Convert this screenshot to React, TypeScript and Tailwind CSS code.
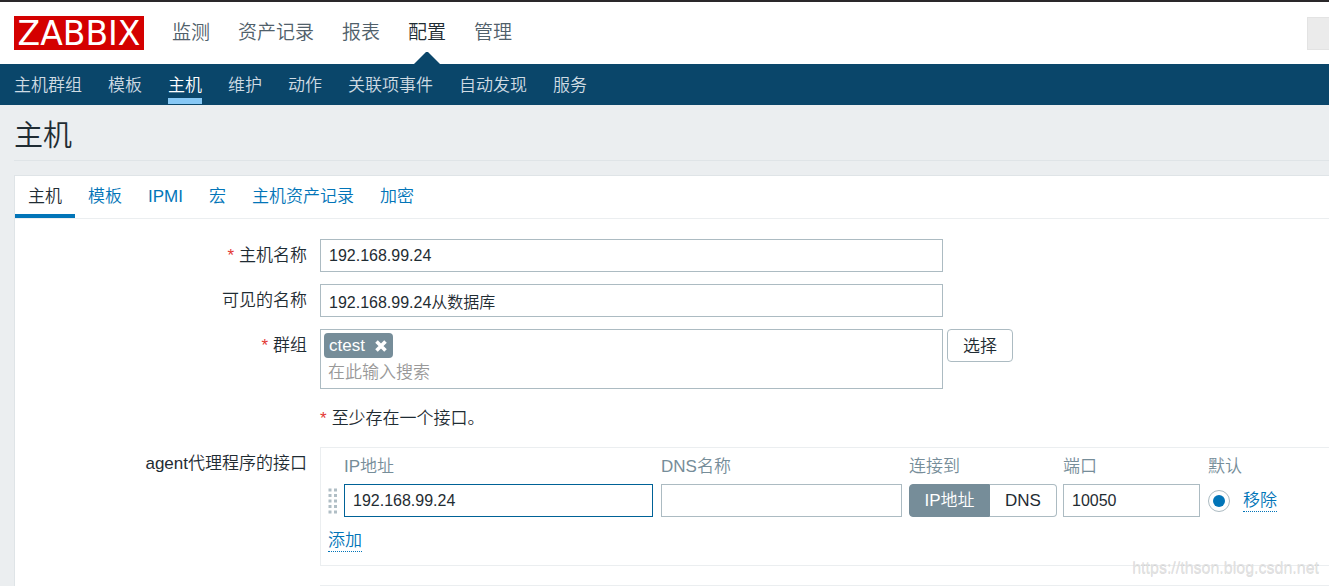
import { useState } from "react";
import type { ReactNode } from "react";

const mainMenu = ["监测", "资产记录", "报表", "配置", "管理"];
const subMenu = ["主机群组", "模板", "主机", "维护", "动作", "关联项事件", "自动发现", "服务"];
const tabs = ["主机", "模板", "IPMI", "宏", "主机资产记录", "加密"];

const inputClass =
  "h-[33px] border border-[#acbbc2] bg-white px-2 text-base text-[#1f2c33] outline-none focus:border-[#006297]";

function Asterisk() {
  return <span className="mr-[5px] text-[#e33734]">*</span>;
}

type RowProps = {
  label?: string;
  htmlFor?: string;
  required?: boolean;
  children: ReactNode;
};

function FormRow({ label, htmlFor, required, children }: RowProps) {
  return (
    <div className="grid grid-cols-[292px_minmax(0,1fr)] gap-x-[13px]">
      <div className="text-right leading-[34px]">
        {label && (
          <label htmlFor={htmlFor} className="block h-8">
            {required && <Asterisk />}
            {label}
          </label>
        )}
      </div>
      <div>{children}</div>
    </div>
  );
}

function Header() {
  return (
    <header className="border-t-2 border-[#2a282a] bg-white">
      <div className="flex h-[62px] items-center justify-between pl-3.5">
        <div className="flex items-center gap-7">
          <a
            href="#"
            className="flex h-[34px] w-[130px] items-center justify-center bg-[#d40000] font-['DejaVu_Sans',sans-serif] text-[33px] leading-none font-normal text-white"
          >
            ZABBIX
          </a>
          <nav className="flex gap-7 text-[19px]">
            {mainMenu.map((item) => (
              <a
                key={item}
                href="#"
                className={`relative leading-[62px] ${item === "配置" ? "text-[#1f2c33]" : "text-[#50606a]"}`}
              >
                {item}
                {item === "配置" && (
                  <svg className="absolute bottom-0 left-1/2 -translate-x-1/2" width="26" height="12" viewBox="0 0 26 12">
                    <path d="M0 12L12 0h2l12 12z" fill="#0a466a" />
                  </svg>
                )}
              </a>
            ))}
          </nav>
        </div>
        <input
          type="search"
          aria-label="搜索"
          className="h-[33px] w-[22px] border border-r-0 border-[#e3e3e3] bg-[#ebebeb] outline-none"
        />
      </div>
      <nav className="flex h-[41px] gap-[26px] bg-[#0a466a] px-3.5">
        {subMenu.map((item) => (
          <a
            key={item}
            href="#"
            className={`mb-px h-10 border-b-[6px] pt-1 leading-9 ${
              item === "主机" ? "border-[#87c8f5] text-white" : "border-transparent text-[#cfdbe3]"
            }`}
          >
            {item}
          </a>
        ))}
      </nav>
    </header>
  );
}

function GroupSelect() {
  return (
    <div className="flex items-start gap-1">
      <div className="h-[60px] w-[623px] border border-[#acbbc2] pt-[3px] pl-[3px]">
        <span className="flex h-[25px] w-[69px] items-center justify-between rounded-sm bg-[#768d99] pr-1.5 pl-[5px] text-white">
          ctest
          <button type="button" aria-label="移除 ctest">
            <svg width="12" height="12" viewBox="0 0 12 12">
              <path d="M1.5 1.5l9 9M10.5 1.5l-9 9" stroke="#fff" strokeWidth="3.6" />
            </svg>
          </button>
        </span>
        <input
          id="groups"
          placeholder="在此输入搜索"
          className="block h-[30px] w-full pl-1 outline-none placeholder:text-[#999]"
        />
      </div>
      <button type="button" className="h-[33px] w-[66px] rounded-sm border border-[#acbbc2] pt-0.5">
        选择
      </button>
    </div>
  );
}

function DragHandle() {
  return (
    <svg width="10" height="26" viewBox="0 0 10 26" fill="#b0bec5">
      {[0, 1, 2, 3, 4].map((i) => (
        <g key={i}>
          <rect x="0.5" y={i * 5.5 + 0.5} width="3" height="3" />
          <rect x="6" y={i * 5.5 + 0.5} width="3" height="3" />
        </g>
      ))}
    </svg>
  );
}

const linkClass = "border-b border-dotted border-[#0275b8] leading-5 text-[#0275b8]";

function Interfaces() {
  const [connectTo, setConnectTo] = useState("ip");

  return (
    <div className="border border-r-0 border-[#ebeef0] pl-[7px]">
      <table className="w-full table-fixed border-collapse text-left">
        <colgroup>
          <col className="w-4" />
          <col className="w-[317px]" />
          <col className="w-[248px]" />
          <col className="w-[154px]" />
          <col className="w-[145px]" />
          <col className="w-[35px]" />
          <col />
        </colgroup>
        <thead>
          <tr className="h-9 text-[#768d99]">
            <td />
            <th className="pt-0.5 font-[350]">IP地址</th>
            <th className="pt-0.5 font-[350]">DNS名称</th>
            <th className="pt-0.5 font-[350]">连接到</th>
            <th className="pt-0.5 font-[350]">端口</th>
            <th colSpan={2} className="pt-0.5 font-[350]">默认</th>
          </tr>
        </thead>
        <tbody>
          <tr className="h-[33px]">
            <td>
              <DragHandle />
            </td>
            <td>
              <input
                aria-label="IP地址"
                defaultValue="192.168.99.24"
                className="block h-[33px] w-[309px] border border-[#006297] px-2 text-base outline-none"
              />
            </td>
            <td>
              <input aria-label="DNS名称" className={`block w-[241px] ${inputClass}`} />
            </td>
            <td>
              <div className="relative flex w-[148px] text-center leading-[31px]">
                <label className="w-[81px] cursor-pointer rounded-l-sm border border-[#acbbc2] has-checked:border-[#768d99] has-checked:bg-[#768d99] has-checked:text-white">
                  <input
                    type="radio"
                    name="connect"
                    className="sr-only"
                    checked={connectTo === "ip"}
                    onChange={() => setConnectTo("ip")}
                  />
                  IP地址
                </label>
                <label className="w-[67px] cursor-pointer rounded-r-sm border border-l-0 border-[#acbbc2] has-checked:border-[#768d99] has-checked:bg-[#768d99] has-checked:text-white">
                  <input
                    type="radio"
                    name="connect"
                    className="sr-only"
                    checked={connectTo === "dns"}
                    onChange={() => setConnectTo("dns")}
                  />
                  DNS
                </label>
              </div>
            </td>
            <td>
              <input aria-label="端口" defaultValue="10050" className={`block w-[137px] ${inputClass}`} />
            </td>
            <td>
              <input
                type="radio"
                name="default"
                aria-label="默认"
                defaultChecked
                className="block size-[22px] appearance-none rounded-full border border-[#acbbc2] p-1 checked:bg-[#0275b8] checked:bg-clip-content"
              />
            </td>
            <td>
              <button type="button" className={linkClass}>移除</button>
            </td>
          </tr>
          <tr className="h-12">
            <td colSpan={7}>
              <button type="button" className={linkClass}>添加</button>
            </td>
          </tr>
        </tbody>
      </table>
    </div>
  );
}

export default function App() {
  return (
    <div className="relative flex min-h-screen flex-col bg-[#ebeef0] font-['Liberation_Sans','Noto_Sans_CJK_SC',sans-serif] text-[17px] font-[350] text-[#1f2c33]">
      <Header />
      <main className="flex flex-1 flex-col pl-3.5">
        <h1 className="mb-3.5 border-b border-[#dfe4e7] pt-2 text-[29px] leading-[47px]">主机</h1>

        <div className="flex-1 border-t border-l border-[#dfe4e7] bg-white">
          {/* Tabs */}
          <div role="tablist" className="flex h-[43px] border-b border-[#ebeef0]">
            {tabs.map((tab, i) => (
              <button
                key={tab}
                type="button"
                role="tab"
                aria-selected={i === 0}
                className={`border-b-4 px-[13px] pt-1 ${
                  i === 0 ? "border-[#0275b8]" : "border-transparent text-[#0275b8]"
                }`}
              >
                {tab}
              </button>
            ))}
          </div>

          {/* Host form */}
          <form className="flex flex-col gap-3 pt-5">
            <FormRow label="主机名称" htmlFor="host" required>
              <input id="host" defaultValue="192.168.99.24" className={`block w-[623px] ${inputClass}`} />
            </FormRow>
            <FormRow label="可见的名称" htmlFor="visible">
              <input id="visible" defaultValue="192.168.99.24从数据库" className={`block w-[623px] ${inputClass}`} />
            </FormRow>
            <FormRow label="群组" htmlFor="groups" required>
              <GroupSelect />
            </FormRow>
            <FormRow>
              <p className="h-[34px] leading-9">
                <Asterisk />
                至少存在一个接口。
              </p>
            </FormRow>
            <FormRow label="agent代理程序的接口">
              <Interfaces />
            </FormRow>
            <FormRow>
              <div className="mt-[7px] border-t border-[#ebeef0]" />
            </FormRow>
          </form>
        </div>
      </main>
      <div className="pointer-events-none absolute right-2.5 bottom-2 text-base leading-5 text-[#e2e2e2] text-shadow-2xs">
        https://thson.blog.csdn.net
      </div>
    </div>
  );
}
